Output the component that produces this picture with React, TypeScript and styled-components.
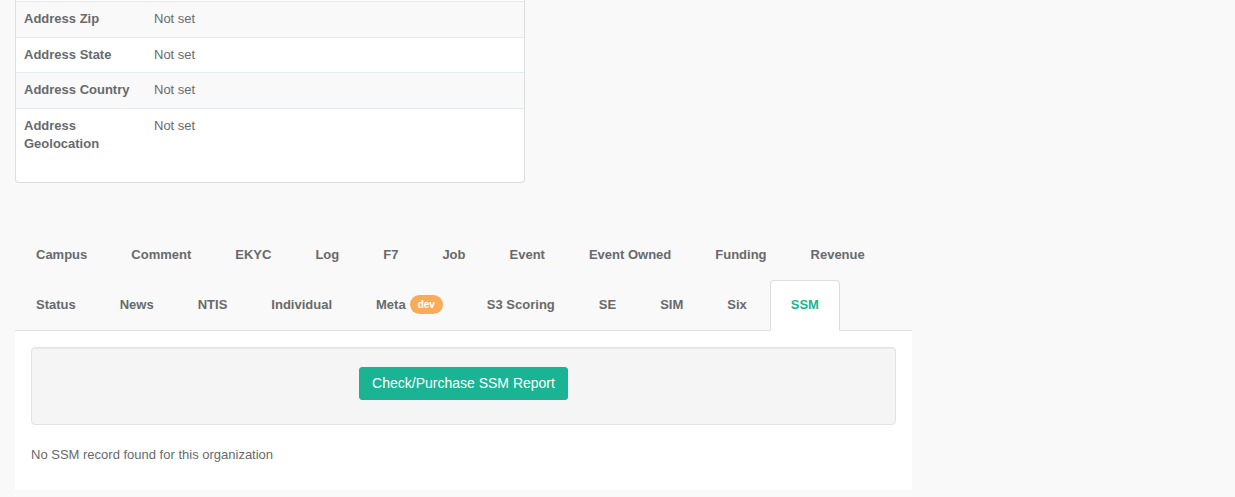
import React from "react";
import styled, { createGlobalStyle } from "styled-components";

const GlobalStyle = createGlobalStyle`
  * { box-sizing: border-box; }
  html, body {
    margin: 0;
    padding: 0;
    background: #f9f9f9;
    font-family: "Liberation Sans", Arial, Helvetica, sans-serif;
    font-size: 13px;
    line-height: 1.42857;
    color: #676a6c;
  }
`;

const Page = styled.div`
  padding: 0 15px;
`;

const Card = styled.div`
  width: 510px;
  padding-top: 1px;
  background: #ffffff;
  border: 1px solid #dddddd;
  border-top: none;
  border-radius: 0 0 4px 4px;
`;

const Table = styled.table`
  width: 100%;
  border-collapse: collapse;
  margin-bottom: 20px;
`;

const Row = styled.tr<{ $striped?: boolean }>`
  background: ${(p) => (p.$striped ? "#f9f9f9" : "#ffffff")};
`;

const LabelCell = styled.th`
  width: 130px;
  padding: 8px;
  text-align: left;
  vertical-align: top;
  font-weight: bold;
  border-top: 1px solid #e7eaec;
`;

const ValueCell = styled.td`
  padding: 8px;
  vertical-align: top;
  border-top: 1px solid #e7eaec;
`;

const TabsSection = styled.div`
  width: 897px;
  margin-top: 47px;
`;

const TabList = styled.ul`
  display: flex;
  flex-wrap: wrap;
  list-style: none;
  margin: 0;
  padding: 0;
  border-bottom: 1px solid #dddddd;
`;

const TabItem = styled.li<{ $active?: boolean }>`
  margin-right: 2px;
  position: relative;
  height: ${(p) => (p.$active ? "51px" : "50px")};
  margin-bottom: ${(p) => (p.$active ? "-1px" : "0")};
`;

const TabLink = styled.a<{ $active?: boolean }>`
  display: flex;
  align-items: center;
  height: 100%;
  padding: ${(p) => (p.$active ? "0 20px 1px" : "0 20px")};
  font-weight: bold;
  font-size: 13px;
  line-height: 18px;
  text-decoration: none;
  cursor: pointer;
  white-space: nowrap;
  color: ${(p) => (p.$active ? "#1ab394" : "#676a6c")};
  background: ${(p) => (p.$active ? "#ffffff" : "transparent")};
  border: 1px solid transparent;
  border-color: ${(p) => (p.$active ? "#dddddd #dddddd transparent" : "transparent")};
  border-radius: 4px 4px 0 0;
`;

const Badge = styled.span`
  display: inline-block;
  margin-left: 4px;
  padding: 3px 8px;
  font-size: 10px;
  line-height: 13px;
  font-weight: bold;
  color: #ffffff;
  background: #f8ac59;
  border-radius: 10px;
`;

const TabPanel = styled.div`
  background: #ffffff;
  padding: 16px 16px 16px;
`;

const Well = styled.div`
  padding: 19px 19px 24px;
  margin-bottom: 21px;
  background: #f5f5f5;
  border: 1px solid #e3e3e3;
  border-radius: 4px;
  box-shadow: inset 0 1px 1px rgba(0, 0, 0, 0.05);
  display: flex;
  justify-content: center;
`;

const PrimaryButton = styled.button`
  display: inline-block;
  padding: 6px 12px;
  font-family: inherit;
  font-size: 14px;
  line-height: 19px;
  color: #ffffff;
  background: #1ab394;
  border: 1px solid #1ab394;
  border-radius: 3px;
  cursor: pointer;
`;

const Note = styled.p`
  margin: 0 0 10px;
`;

const rows = [
  { label: "Address Zip", value: "Not set" },
  { label: "Address State", value: "Not set" },
  { label: "Address Country", value: "Not set" },
  { label: "Address Geolocation", value: "Not set" },
];

const tabs: { name: string; badge?: string }[] = [
  { name: "Campus" },
  { name: "Comment" },
  { name: "EKYC" },
  { name: "Log" },
  { name: "F7" },
  { name: "Job" },
  { name: "Event" },
  { name: "Event Owned" },
  { name: "Funding" },
  { name: "Revenue" },
  { name: "Status" },
  { name: "News" },
  { name: "NTIS" },
  { name: "Individual" },
  { name: "Meta", badge: "dev" },
  { name: "S3 Scoring" },
  { name: "SE" },
  { name: "SIM" },
  { name: "Six" },
  { name: "SSM" },
];

export default function App() {
  const active = "SSM";
  return (
    <>
      <GlobalStyle />
      <Page>
        <Card>
          <Table>
            <tbody>
              {rows.map((r, i) => (
                <Row key={r.label} $striped={i % 2 === 0}>
                  <LabelCell>{r.label}</LabelCell>
                  <ValueCell>{r.value}</ValueCell>
                </Row>
              ))}
            </tbody>
          </Table>
        </Card>

        <TabsSection>
          <TabList>
            {tabs.map((t) => (
              <TabItem key={t.name} $active={t.name === active}>
                <TabLink $active={t.name === active}>
                  {t.name}
                  {t.badge && <Badge>{t.badge}</Badge>}
                </TabLink>
              </TabItem>
            ))}
          </TabList>
          <TabPanel>
            <Well>
              <PrimaryButton>Check/Purchase SSM Report</PrimaryButton>
            </Well>
            <Note>No SSM record found for this organization</Note>
          </TabPanel>
        </TabsSection>
      </Page>
    </>
  );
}
